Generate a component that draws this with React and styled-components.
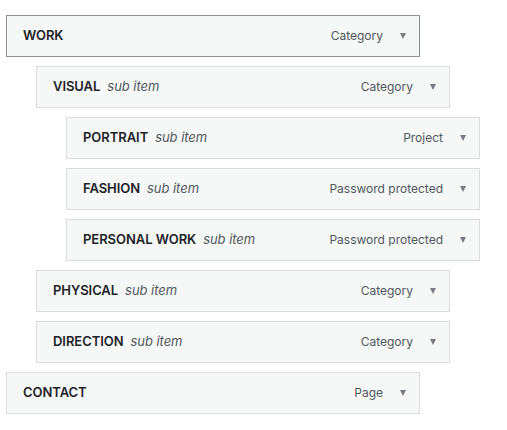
import React from "react";
import styled, { createGlobalStyle } from "styled-components";

const Global = createGlobalStyle`
  html, body { margin: 0; padding: 0; background: #fff; }
  body { font-family: Inter, "Noto Sans", sans-serif; }
`;

const List = styled.ul`
  list-style: none;
  margin: 0;
  padding: 15px 0 0 6px;
  display: flex;
  flex-direction: column;
  gap: 9px;
`;

const Item = styled.li`
  box-sizing: border-box;
  width: 414px;
  height: 42px;
  margin-left: ${(p) => p.$depth * 30}px;
  display: flex;
  align-items: center;
  padding: 0 13px 2px 16px;
  background: #f6f7f7;
  border: 1px solid ${(p) => (p.$active ? "#8c8f94" : "#dcdcde")};
`;

const Title = styled.span`
  flex: 1;
  font-size: 13px;
  font-weight: 600;
  color: #1d2327;
  letter-spacing: -0.05px;
`;

const Sub = styled.span`
  font-style: italic;
  font-weight: 400;
  color: #50575e;
  margin-left: 7px;
`;

const Type = styled.span`
  font-size: 12px;
  color: #50575e;
`;

const Arrow = styled.span`
  width: 0;
  height: 0;
  margin: 2px 0 0 17px;
  border-left: 3.5px solid transparent;
  border-right: 3.5px solid transparent;
  border-top: 6px solid #787c82;
`;

const items = [
  { title: "WORK", type: "Category", depth: 0, active: true },
  { title: "VISUAL", sub: true, type: "Category", depth: 1 },
  { title: "PORTRAIT", sub: true, type: "Project", depth: 2 },
  { title: "FASHION", sub: true, type: "Password protected", depth: 2 },
  { title: "PERSONAL WORK", sub: true, type: "Password protected", depth: 2 },
  { title: "PHYSICAL", sub: true, type: "Category", depth: 1 },
  { title: "DIRECTION", sub: true, type: "Category", depth: 1 },
  { title: "CONTACT", type: "Page", depth: 0 },
];

export default function App() {
  return (
    <>
      <Global />
      <List>
        {items.map((it) => (
          <Item key={it.title} $depth={it.depth} $active={it.active}>
            <Title>
              {it.title}
              {it.sub && <Sub>sub item</Sub>}
            </Title>
            <Type>{it.type}</Type>
            <Arrow />
          </Item>
        ))}
      </List>
    </>
  );
}
